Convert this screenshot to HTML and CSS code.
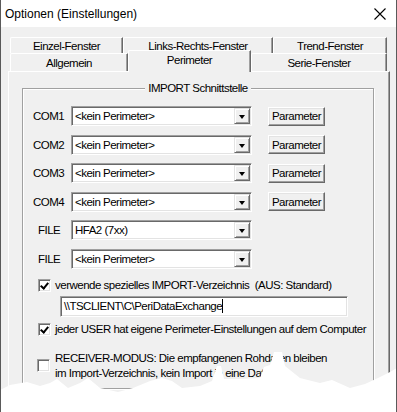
FILE: index.html
```html
<!DOCTYPE html>
<html lang="de">
<head>
    <meta charset="UTF-8">
    <meta name="viewport" content="width=device-width, initial-scale=1.0">
    <title>Optionen (Einstellungen)</title>
    <link rel="stylesheet" href="styles.css">
</head>
<body>

    <div class="window">
        <div class="titlebar">
            <span class="title">Optionen (Einstellungen)</span>
            <svg class="close" width="12" height="12" viewBox="0 0 12 12">
                <path d="M0.5 0.5 L11.5 11.5 M11.5 0.5 L0.5 11.5" stroke="#000" stroke-width="1.1" fill="none"/>
            </svg>
        </div>

        <div class="client">
            <!-- Karteireiter -->
            <div class="tabs">
                <div class="tab-row">
                    <div class="tab tab-einzel">Einzel-Fenster</div>
                    <div class="tab tab-links">Links-Rechts-Fenster</div>
                    <div class="tab tab-trend">Trend-Fenster</div>
                </div>
                <div class="tab-row front">
                    <div class="tab tab-allg">Allgemein</div>
                    <div class="tab tab-peri active">Perimeter</div>
                    <div class="tab tab-serie">Serie-Fenster</div>
                </div>
            </div>

            <div class="panel">
                <div class="group">
                    <span class="group-title">IMPORT Schnittstelle</span>

                    <div class="ports">
                        <div class="port-row">
                            <span class="port-label">COM1</span>
                            <div class="combo"><span class="combo-text">&lt;kein Perimeter&gt;</span><span class="drop"></span></div>
                            <button class="btn">Parameter</button>
                        </div>
                        <div class="port-row">
                            <span class="port-label">COM2</span>
                            <div class="combo"><span class="combo-text">&lt;kein Perimeter&gt;</span><span class="drop"></span></div>
                            <button class="btn">Parameter</button>
                        </div>
                        <div class="port-row">
                            <span class="port-label">COM3</span>
                            <div class="combo"><span class="combo-text">&lt;kein Perimeter&gt;</span><span class="drop"></span></div>
                            <button class="btn">Parameter</button>
                        </div>
                        <div class="port-row">
                            <span class="port-label">COM4</span>
                            <div class="combo"><span class="combo-text">&lt;kein Perimeter&gt;</span><span class="drop"></span></div>
                            <button class="btn">Parameter</button>
                        </div>
                        <div class="port-row">
                            <span class="port-label file">FILE</span>
                            <div class="combo"><span class="combo-text">HFA2 (7xx)</span><span class="drop"></span></div>
                        </div>
                        <div class="port-row">
                            <span class="port-label file">FILE</span>
                            <div class="combo"><span class="combo-text">&lt;kein Perimeter&gt;</span><span class="drop"></span></div>
                        </div>
                    </div>

                    <div class="check-row first">
                        <span class="checkbox checked"></span>
                        <span class="check-text">verwende spezielles IMPORT-Verzeichnis&nbsp; (AUS: Standard)</span>
                    </div>
                    <div class="path-box">\\TSCLIENT\C\PeriDataExchange<span class="caret"></span></div>

                    <div class="check-row second">
                        <span class="checkbox checked"></span>
                        <span class="check-text">jeder USER hat eigene Perimeter-Einstellungen auf dem Computer</span>
                    </div>

                    <div class="check-row third">
                        <span class="checkbox"></span>
                        <span class="check-text">RECEIVER-MODUS: Die empfangenen Rohdaten bleiben<br>im Import-Verzeichnis, kein Import in eine Datei</span>
                    </div>
                </div>
            </div>
        </div>

        <!-- abgerissener Rand unten -->
        <svg class="torn" width="397" height="72" viewBox="0 340 397 72">
            <polygon fill="#fff" points="0,390 10,385 27,382 40,386 50,383 57,379 68,388 80,383 88,378 100,388 118,392 133,388 150,381 162,378 172,381 182,388 200,386 212,381 217,366 221,366 224,379 240,379 260,378 264,367 270,365 274,352 282,352 285,366 300,378 320,383 332,380 350,388 365,384 378,378 390,372 397,368 397,412 0,412"/>
        </svg>
    </div>

</body>
</html>
```

FILE: styles.css
```css
body {
    margin: 0;
    background: #fff;
    font-family: "Liberation Sans", Arial, sans-serif;
    font-size: 11.5px;
    letter-spacing: -0.5px;
    color: #000;
}
.window {
    position: relative;
    width: 397px;
    height: 412px;
    box-sizing: border-box;
    border-left: 1px solid #5a5a5a;
    border-right: 1px solid #5a5a5a;
    background: #f0f0f0;
    overflow: hidden;
}
.titlebar {
    height: 27px;
    background: #fff;
    display: flex;
    align-items: center;
    justify-content: space-between;
    padding: 0 10px 0 4px;
}
.title {
    font-size: 12px;
    letter-spacing: 0;
}
.close {
    display: block;
}
.client {
    padding: 10px 0 0 7px;
}

/* Karteireiter */
.tabs {
    margin-left: 2px;
}
.tab-row {
    display: flex;
    height: 16px;
}
.tab-row.front {
    height: 18px;
    align-items: flex-end;
}
.tab {
    box-sizing: border-box;
    height: 100%;
    display: flex;
    justify-content: center;
    align-items: center;
    background: #f0f0f0;
    border-top: 1px solid #fff;
    border-left: 1px solid #fff;
    border-right: 1px solid #696969;
    border-top-left-radius: 2px;
    box-shadow: inset -1px 0 #a0a0a0;
    padding-top: 1px;
    flex-shrink: 0;
}
.tab-row.front .tab {
    height: 18px;
}
.tab-einzel { width: 113px; }
.tab-links { width: 150px; }
.tab-trend { width: 114px; }
.tab-allg { width: 118px; }
.tab-peri { width: 123px; }
.tab-serie { width: 136px; }
.tab-row.front .tab.active {
    position: relative;
    z-index: 2;
    height: 22px;
    margin-bottom: -1px;
    padding-bottom: 4px;
}

/* Seite */
.panel {
    width: 382px;
    height: 400px;
    box-sizing: border-box;
    border-top: 1px solid #fff;
    border-left: 1px solid #fff;
    border-right: 1px solid #696969;
    box-shadow: inset -1px 0 #a0a0a0;
    padding: 16px 0 0 13px;
}
.group {
    width: 352px;
    height: 301px;
    box-sizing: border-box;
    border: 1px solid #a0a0a0;
    box-shadow: 1px 1px 0 #fff, inset 1px 1px 0 #fff;
    display: flex;
    flex-direction: column;
    align-items: flex-start;
}
.group-title {
    align-self: center;
    margin-top: -8px;
    padding: 0 3px;
    line-height: 15px;
    background: #f0f0f0;
}
.ports {
    margin-top: 10px;
    display: flex;
    flex-direction: column;
    gap: 8.5px;
}
.port-row {
    display: flex;
    align-items: center;
    height: 20px;
}
.port-label {
    width: 48px;
    box-sizing: border-box;
    padding-left: 10px;
    flex-shrink: 0;
    white-space: nowrap;
}
.port-label.file {
    padding-left: 15px;
}

/* Kombinationsfeld */
.combo {
    width: 181px;
    height: 20px;
    flex-shrink: 0;
    box-sizing: border-box;
    background: #fff;
    border: 1px solid;
    border-color: #a0a0a0 #fff #fff #a0a0a0;
    box-shadow: inset 1px 1px #696969, inset -1px -1px #e3e3e3;
    display: flex;
    align-items: center;
    justify-content: space-between;
    padding: 0 1px 0 3px;
}
.drop {
    position: relative;
    width: 16px;
    height: 16px;
    box-sizing: border-box;
    background: #f0f0f0;
    border: 1px solid;
    border-color: #e3e3e3 #696969 #696969 #e3e3e3;
    box-shadow: inset 1px 1px #fff, inset -1px -1px #a0a0a0;
}
.drop::after {
    content: "";
    position: absolute;
    left: 4px;
    top: 6px;
    border-left: 3.5px solid transparent;
    border-right: 3.5px solid transparent;
    border-top: 4px solid #000;
}
.btn {
    margin-left: 16px;
    width: 57px;
    height: 19px;
    flex-shrink: 0;
    padding: 0;
    font: inherit;
    letter-spacing: inherit;
    color: #000;
    background: #f0f0f0;
    border: 1px solid;
    border-color: #fff #696969 #696969 #fff;
    box-shadow: inset -1px -1px #a0a0a0, inset 1px 1px #e3e3e3;
}

/* Kontrollkästchen */
.check-row {
    display: flex;
    align-items: center;
    gap: 4px;
    margin-left: 15px;
    line-height: 15px;
    white-space: nowrap;
}
.check-row.first {
    margin-top: 9px;
}
.check-row.second {
    margin-top: 5px;
}
.check-row.third {
    margin-top: 14px;
    margin-left: 14px;
    gap: 5px;
}
.checkbox {
    position: relative;
    width: 13px;
    height: 13px;
    box-sizing: border-box;
    background: #fff;
    border: 1px solid;
    border-color: #a0a0a0 #fff #fff #a0a0a0;
    box-shadow: inset 1px 1px #696969, inset -1px -1px #e3e3e3;
    flex-shrink: 0;
}
.checkbox.checked::after {
    content: "";
    position: absolute;
    left: 3px;
    top: 1px;
    width: 3px;
    height: 6px;
    border-right: 2px solid #000;
    border-bottom: 2px solid #000;
    transform: rotate(40deg);
}
.path-box {
    margin: 3px 0 0 37px;
    width: 288px;
    height: 21px;
    box-sizing: border-box;
    background: #fff;
    border: 1px solid;
    border-color: #a0a0a0 #fff #fff #a0a0a0;
    box-shadow: inset 1px 1px #696969, inset -1px -1px #e3e3e3;
    display: flex;
    align-items: center;
    padding-left: 3px;
}
.caret {
    width: 1px;
    height: 14px;
    background: #000;
}

.torn {
    position: absolute;
    left: -1px;
    bottom: 0;
}
```
